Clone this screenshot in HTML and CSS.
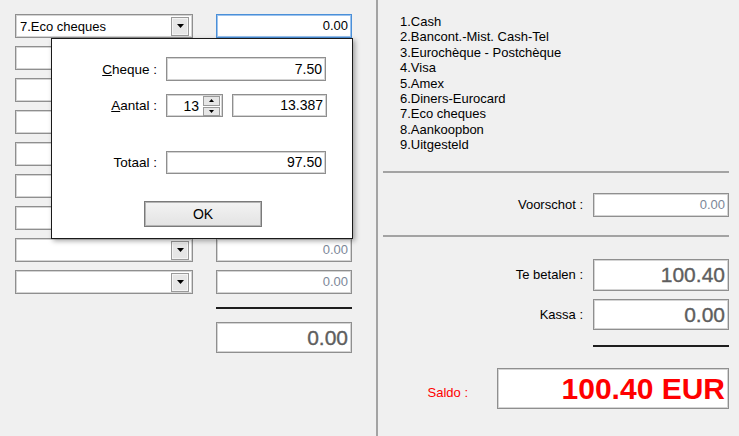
FILE: index.html
```html
<!DOCTYPE html>
<html>
<head>
<meta charset="utf-8">
<link rel="stylesheet" href="styles.css">
</head>
<body>
<div class="window">
  <section class="left">
    <div class="rows">
      <div class="row">
        <div class="combo"><span class="combo-text">7.Eco cheques</span><span class="drop"><svg width="7" height="4" viewBox="0 0 7 4"><path d="M0 0H7L3.5 4Z"/></svg></span></div>
        <div class="tb focus">0.00</div>
      </div>
      <div class="row">
        <div class="combo"><span class="combo-text"></span><span class="drop"><svg width="7" height="4" viewBox="0 0 7 4"><path d="M0 0H7L3.5 4Z"/></svg></span></div>
        <div class="tb dim">0.00</div>
      </div>
      <div class="row">
        <div class="combo"><span class="combo-text"></span><span class="drop"><svg width="7" height="4" viewBox="0 0 7 4"><path d="M0 0H7L3.5 4Z"/></svg></span></div>
        <div class="tb dim">0.00</div>
      </div>
      <div class="row">
        <div class="combo"><span class="combo-text"></span><span class="drop"><svg width="7" height="4" viewBox="0 0 7 4"><path d="M0 0H7L3.5 4Z"/></svg></span></div>
        <div class="tb dim">0.00</div>
      </div>
      <div class="row">
        <div class="combo"><span class="combo-text"></span><span class="drop"><svg width="7" height="4" viewBox="0 0 7 4"><path d="M0 0H7L3.5 4Z"/></svg></span></div>
        <div class="tb dim">0.00</div>
      </div>
      <div class="row">
        <div class="combo"><span class="combo-text"></span><span class="drop"><svg width="7" height="4" viewBox="0 0 7 4"><path d="M0 0H7L3.5 4Z"/></svg></span></div>
        <div class="tb dim">0.00</div>
      </div>
      <div class="row">
        <div class="combo"><span class="combo-text"></span><span class="drop"><svg width="7" height="4" viewBox="0 0 7 4"><path d="M0 0H7L3.5 4Z"/></svg></span></div>
        <div class="tb dim">0.00</div>
      </div>
      <div class="row">
        <div class="combo"><span class="combo-text"></span><span class="drop"><svg width="7" height="4" viewBox="0 0 7 4"><path d="M0 0H7L3.5 4Z"/></svg></span></div>
        <div class="tb dim">0.00</div>
      </div>
      <div class="row">
        <div class="combo"><span class="combo-text"></span><span class="drop"><svg width="7" height="4" viewBox="0 0 7 4"><path d="M0 0H7L3.5 4Z"/></svg></span></div>
        <div class="tb dim">0.00</div>
      </div>
    </div>
    <div class="sum-line"></div>
    <div class="tb big total">0.00</div>

    <div class="dialog">
      <div class="dlg-row r-cheque">
        <label class="dlg-label"><u>C</u>heque :</label>
        <div class="tb dlg-tb">7.50</div>
      </div>
      <div class="dlg-row r-aantal">
        <label class="dlg-label"><u>A</u>antal :</label>
        <div class="spin">
          <span class="spin-val">13</span>
          <span class="spin-btns">
            <span class="spin-btn up"><svg width="5" height="3" viewBox="0 0 5 3"><path d="M2.5 0L5 3H0Z"/></svg></span>
            <span class="spin-btn down"><svg width="5" height="3" viewBox="0 0 5 3"><path d="M0 0H5L2.5 3Z"/></svg></span>
          </span>
        </div>
        <div class="tb count">13.387</div>
      </div>
      <div class="dlg-row r-totaal">
        <label class="dlg-label">Totaal :</label>
        <div class="tb dlg-tb">97.50</div>
      </div>
      <div class="dlg-actions">
        <button class="ok">OK</button>
      </div>
    </div>
  </section>

  <div class="vdivider"></div>

  <section class="right">
    <ul class="list">
      <li>1.Cash</li>
      <li>2.Bancont.-Mist. Cash-Tel</li>
      <li>3.Eurochèque - Postchèque</li>
      <li>4.Visa</li>
      <li>5.Amex</li>
      <li>6.Diners-Eurocard</li>
      <li>7.Eco cheques</li>
      <li>8.Aankoopbon</li>
      <li>9.Uitgesteld</li>
    </ul>
    <div class="hsep sep1"></div>
    <div class="field f-voorschot">
      <span class="flabel">Voorschot :</span>
      <div class="tb dim">0.00</div>
    </div>
    <div class="hsep sep2"></div>
    <div class="field f-betalen">
      <span class="flabel">Te betalen :</span>
      <div class="tb big">100.40</div>
    </div>
    <div class="field f-kassa">
      <span class="flabel">Kassa :</span>
      <div class="tb big">0.00</div>
    </div>
    <div class="kassa-line"></div>
    <div class="field f-saldo">
      <span class="flabel saldo-label">Saldo :</span>
      <div class="tb saldo">100.40 EUR</div>
    </div>
  </section>
</div>
</body>
</html>
```

FILE: styles.css
```css
html, body {
  margin: 0;
  padding: 0;
}
body {
  background: #f0f0f0;
  font-family: "Liberation Sans", Arial, sans-serif;
  font-size: 13px;
  color: #000;
}
.window {
  display: flex;
  width: 739px;
  height: 436px;
  overflow: hidden;
}

/* ---------- left pane ---------- */
.left {
  position: relative;
  width: 376px;
  flex: none;
  box-sizing: border-box;
  padding: 14px 0 0 15px;
}
.rows {
  display: flex;
  flex-direction: column;
  gap: 8px;
}
.row {
  display: flex;
  gap: 23px;
  height: 24px;
}
.combo {
  width: 178px;
  height: 24px;
  box-sizing: border-box;
  background: #fff;
  border: 1px solid #8f8f8f;
  box-shadow: inset 0 0 0 1px #d4d4d4;
  display: flex;
  align-items: center;
}
.combo-text {
  flex: 1;
  padding-left: 4px;
  white-space: nowrap;
}
.drop {
  width: 18px;
  height: 19px;
  margin-right: 3px;
  box-sizing: border-box;
  border: 1px solid #9a9a9a;
  box-shadow: inset 0 0 0 1px #f4f4f4;
  background: #e6e6e6;
  display: flex;
  align-items: center;
  justify-content: center;
}
.drop svg, .spin-btn svg {
  fill: #000;
  display: block;
}

.tb {
  width: 136px;
  height: 24px;
  box-sizing: border-box;
  background: #fff;
  border: 1px solid #8f8f8f;
  box-shadow: inset 0 0 0 1px #d4d4d4;
  text-align: right;
  padding-right: 3px;
  line-height: 22px;
  white-space: nowrap;
}
.tb.focus {
  border-color: #4a8fd8;
  box-shadow: inset 0 0 0 1px #9cc3ee;
}
.tb.dim {
  color: #7c8798;
}
.tb.big {
  height: 32px;
  font-size: 21px;
  line-height: 30px;
  color: #5e5e5e;
  -webkit-text-stroke: 0.35px #5e5e5e;
}
.sum-line {
  width: 136px;
  height: 2px;
  background: #1e1e1e;
  margin: 13px 0 0 201px;
}
.tb.total {
  margin: 13px 0 0 201px;
  height: 31px;
  line-height: 29px;
}

/* ---------- dialog ---------- */
.dialog {
  position: absolute;
  left: 51px;
  top: 38px;
  width: 302px;
  height: 201px;
  box-sizing: border-box;
  background: #fff;
  border: 1px solid #1a1a1a;
  box-shadow: 2px 2px 5px rgba(0, 0, 0, 0.35);
  padding-top: 18px;
  display: flex;
  flex-direction: column;
}
.dlg-row {
  display: flex;
  align-items: center;
  gap: 9px;
}
.dlg-label {
  width: 105px;
  text-align: right;
  white-space: nowrap;
  font-size: 13.5px;
}
.dlg-tb {
  width: 160px;
  font-size: 14px;
}
.r-cheque .tb { height: 24px; }
.r-aantal { margin-top: 13px; height: 23px; }
.r-totaal { margin-top: 34px; }
.r-totaal .tb { height: 23px; line-height: 21px; }
.spin {
  width: 57px;
  height: 23px;
  box-sizing: border-box;
  background: #fff;
  border: 1px solid #8f8f8f;
  box-shadow: inset 0 0 0 1px #d4d4d4;
  display: flex;
  align-items: center;
  font-size: 14px;
}
.spin-val {
  flex: 1;
  text-align: right;
  padding-right: 4px;
}
.spin-btns {
  width: 17px;
  margin-right: 2px;
  display: flex;
  flex-direction: column;
  gap: 1px;
}
.spin-btn {
  box-sizing: border-box;
  border: 1px solid #9a9a9a;
  background: #e6e6e6;
  display: flex;
  align-items: center;
  justify-content: center;
}
.spin-btn.up { height: 10px; }
.spin-btn.down { height: 9px; }
.count {
  width: 95px;
  height: 23px;
  line-height: 21px;
  font-size: 14px;
}
.dlg-actions {
  margin-top: 27px;
  display: flex;
  justify-content: center;
  padding-left: 2px;
}
.ok {
  width: 118px;
  height: 26px;
  box-sizing: border-box;
  border: 1px solid #7a7a7a;
  box-shadow: inset 0 0 0 1px #b4b4b4;
  background: linear-gradient(#f3f3f3, #e3e3e3);
  font-family: "Liberation Sans", Arial, sans-serif;
  font-size: 14px;
  color: #000;
  padding: 0;
}

/* ---------- divider ---------- */
.vdivider {
  width: 2px;
  flex: none;
  background: #a3a3a3;
}

/* ---------- right pane ---------- */
.right {
  flex: 1;
  display: flex;
  flex-direction: column;
  padding-top: 14px;
}
.list {
  list-style: none;
  margin: 0 0 0 22px;
  padding: 0;
  line-height: 15.4px;
}
.hsep {
  height: 2px;
  background: #a3a3a3;
  margin: 0 10px 0 5px;
}
.sep1 { margin-top: 18px; }
.sep2 { margin-top: 18px; }
.field {
  display: flex;
  justify-content: flex-end;
  align-items: center;
  gap: 10px;
  margin-right: 10px;
}
.f-voorschot { margin-top: 20px; }
.f-betalen { margin-top: 22px; }
.f-kassa { margin-top: 8px; }
.f-kassa .tb { height: 31px; line-height: 29px; }
.kassa-line {
  align-self: flex-end;
  width: 136px;
  height: 2px;
  background: #1e1e1e;
  margin: 15px 10px 0 0;
}
.f-saldo {
  margin-top: 21px;
  gap: 29px;
}
.saldo-label {
  color: #ff0000;
  padding-top: 9px;
}
.tb.saldo {
  width: 232px;
  height: 41px;
  font-size: 30px;
  font-weight: bold;
  line-height: 39px;
  color: #ff0000;
}
```
